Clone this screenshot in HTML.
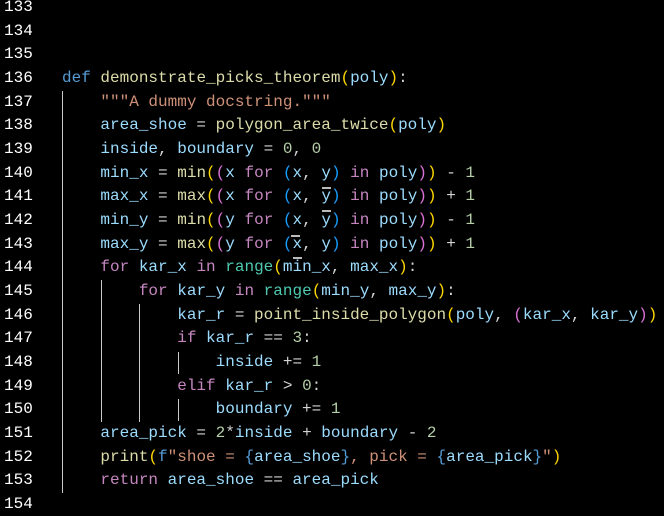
<!DOCTYPE html>
<html><head><meta charset="utf-8"><style>
html,body{margin:0;padding:0;background:#000;width:664px;height:509px;overflow:hidden}
.l{position:absolute;left:0;height:24px;line-height:24px;font-family:"Liberation Mono",monospace;font-size:16px;white-space:pre;color:#d4d4d4}
.n{position:absolute;left:4px;color:#fff}
.c{position:absolute;left:62px}
.k{color:#569cd6}.p{color:#c586c0}.f{color:#dcdcaa}.v{color:#9cdcfe}.b{color:#4ec9b0}.d{color:#b5cea8}.s{color:#ce9178}
.y{color:#ffd700}.o{color:#da70d6}.u{color:#179fff}
.g{position:absolute;width:1px;background:#c8c8c8}
.m{position:absolute;height:2px;width:9px;background:#bbb}
</style></head><body>
<div class="l" style="top:-5px"><span class="n">133</span></div>
<div class="l" style="top:19px"><span class="n">134</span></div>
<div class="l" style="top:42px"><span class="n">135</span></div>
<div class="l" style="top:66px"><span class="n">136</span><span class="c"><span class="k">def</span> <span class="f">demonstrate_picks_theorem</span><span class="y">(</span><span class="v">poly</span><span class="y">)</span>:</span></div>
<div class="l" style="top:90px"><span class="n">137</span><span class="c">    <span class="s">"""A dummy docstring."""</span></span></div>
<div class="l" style="top:113px"><span class="n">138</span><span class="c">    <span class="v">area_shoe</span> = <span class="f">polygon_area_twice</span><span class="y">(</span><span class="v">poly</span><span class="y">)</span></span></div>
<div class="l" style="top:137px"><span class="n">139</span><span class="c">    <span class="v">inside</span>, <span class="v">boundary</span> = <span class="d">0</span>, <span class="d">0</span></span></div>
<div class="l" style="top:161px"><span class="n">140</span><span class="c">    <span class="v">min_x</span> = <span class="f">min</span><span class="y">(</span><span class="o">(</span><span class="v">x</span> <span class="p">for</span> <span class="u">(</span><span class="v">x</span>, <span class="v">y</span><span class="u">)</span> <span class="p">in</span> <span class="v">poly</span><span class="o">)</span><span class="y">)</span> - <span class="d">1</span></span></div>
<div class="l" style="top:184px"><span class="n">141</span><span class="c">    <span class="v">max_x</span> = <span class="f">max</span><span class="y">(</span><span class="o">(</span><span class="v">x</span> <span class="p">for</span> <span class="u">(</span><span class="v">x</span>, <span class="v">y</span><span class="u">)</span> <span class="p">in</span> <span class="v">poly</span><span class="o">)</span><span class="y">)</span> + <span class="d">1</span></span></div>
<div class="l" style="top:208px"><span class="n">142</span><span class="c">    <span class="v">min_y</span> = <span class="f">min</span><span class="y">(</span><span class="o">(</span><span class="v">y</span> <span class="p">for</span> <span class="u">(</span><span class="v">x</span>, <span class="v">y</span><span class="u">)</span> <span class="p">in</span> <span class="v">poly</span><span class="o">)</span><span class="y">)</span> - <span class="d">1</span></span></div>
<div class="l" style="top:232px"><span class="n">143</span><span class="c">    <span class="v">max_y</span> = <span class="f">max</span><span class="y">(</span><span class="o">(</span><span class="v">y</span> <span class="p">for</span> <span class="u">(</span><span class="v">x</span>, <span class="v">y</span><span class="u">)</span> <span class="p">in</span> <span class="v">poly</span><span class="o">)</span><span class="y">)</span> + <span class="d">1</span></span></div>
<div class="l" style="top:255px"><span class="n">144</span><span class="c">    <span class="p">for</span> <span class="v">kar_x</span> <span class="p">in</span> <span class="b">range</span><span class="y">(</span><span class="v">min_x</span>, <span class="v">max_x</span><span class="y">)</span>:</span></div>
<div class="l" style="top:279px"><span class="n">145</span><span class="c">        <span class="p">for</span> <span class="v">kar_y</span> <span class="p">in</span> <span class="b">range</span><span class="y">(</span><span class="v">min_y</span>, <span class="v">max_y</span><span class="y">)</span>:</span></div>
<div class="l" style="top:303px"><span class="n">146</span><span class="c">            <span class="v">kar_r</span> = <span class="f">point_inside_polygon</span><span class="y">(</span><span class="v">poly</span>, <span class="o">(</span><span class="v">kar_x</span>, <span class="v">kar_y</span><span class="o">)</span><span class="y">)</span></span></div>
<div class="l" style="top:326px"><span class="n">147</span><span class="c">            <span class="p">if</span> <span class="v">kar_r</span> == <span class="d">3</span>:</span></div>
<div class="l" style="top:350px"><span class="n">148</span><span class="c">                <span class="v">inside</span> += <span class="d">1</span></span></div>
<div class="l" style="top:374px"><span class="n">149</span><span class="c">            <span class="p">elif</span> <span class="v">kar_r</span> &gt; <span class="d">0</span>:</span></div>
<div class="l" style="top:397px"><span class="n">150</span><span class="c">                <span class="v">boundary</span> += <span class="d">1</span></span></div>
<div class="l" style="top:421px"><span class="n">151</span><span class="c">    <span class="v">area_pick</span> = <span class="d">2</span>*<span class="v">inside</span> + <span class="v">boundary</span> - <span class="d">2</span></span></div>
<div class="l" style="top:445px"><span class="n">152</span><span class="c">    <span class="f">print</span><span class="y">(</span><span class="k">f</span><span class="s">"shoe = </span><span class="k">{</span><span class="v">area_shoe</span><span class="k">}</span><span class="s">, pick = </span><span class="k">{</span><span class="v">area_pick</span><span class="k">}</span><span class="s">"</span><span class="y">)</span></span></div>
<div class="l" style="top:468px"><span class="n">153</span><span class="c">    <span class="p">return</span> <span class="v">area_shoe</span> == <span class="v">area_pick</span></span></div>
<div class="l" style="top:492px"><span class="n">154</span></div>
<div class="g" style="left:62px;top:91px;height:402px"></div>
<div class="g" style="left:101px;top:280px;height:142px"></div>
<div class="g" style="left:139px;top:304px;height:118px"></div>
<div class="g" style="left:178px;top:352px;height:22px"></div>
<div class="g" style="left:178px;top:399px;height:22px"></div>
<div class="m" style="left:322px;top:187px"></div>
<div class="m" style="left:322px;top:210px"></div>
<div class="m" style="left:291px;top:235px"></div>
<div class="m" style="left:293px;top:257px"></div>
</body></html>
